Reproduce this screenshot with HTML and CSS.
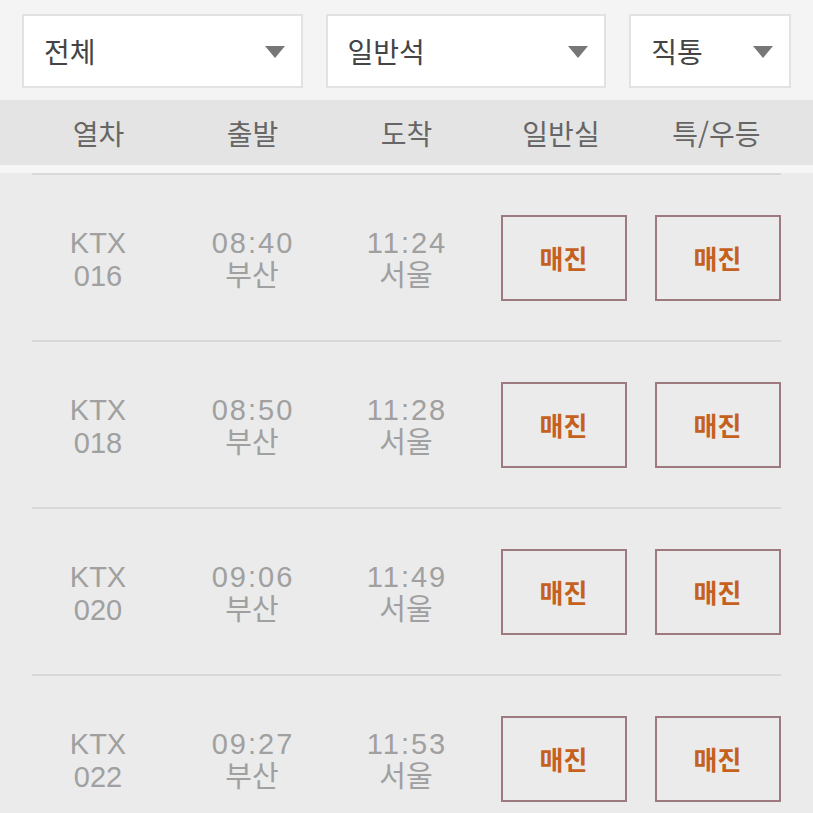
FILE: index.html
```html
<!DOCTYPE html>
<html lang="ko">
<head>
  <meta charset="UTF-8" />
  <title>열차 조회</title>
  <meta name="viewport" content="width=device-width, initial-scale=1.0" />
  <link rel="stylesheet" href="styles.css">
</head>
<body>
  <div class="filter-bar">
    <div class="select select-wide">
      <span>전체</span>
      <span class="caret"></span>
    </div>
    <div class="select select-wide">
      <span>일반석</span>
      <span class="caret"></span>
    </div>
    <div class="select select-small">
      <span>직통</span>
      <span class="caret"></span>
    </div>
  </div>

  <div class="table-head">
    <div>열차</div>
    <div>출발</div>
    <div>도착</div>
    <div>일반실</div>
    <div>특/우등</div>
  </div>
  <div class="head-gap"></div>

  <div class="train-list">
    <div class="train-row">
      <div class="cell">KTX<br>016</div>
      <div class="cell"><span class="time">08:40</span><br>부산</div>
      <div class="cell"><span class="time">11:24</span><br>서울</div>
      <div class="cell"><button class="soldout-btn">매진</button></div>
      <div class="cell"><button class="soldout-btn">매진</button></div>
    </div>
    <div class="train-row">
      <div class="cell">KTX<br>018</div>
      <div class="cell"><span class="time">08:50</span><br>부산</div>
      <div class="cell"><span class="time">11:28</span><br>서울</div>
      <div class="cell"><button class="soldout-btn">매진</button></div>
      <div class="cell"><button class="soldout-btn">매진</button></div>
    </div>
    <div class="train-row">
      <div class="cell">KTX<br>020</div>
      <div class="cell"><span class="time">09:06</span><br>부산</div>
      <div class="cell"><span class="time">11:49</span><br>서울</div>
      <div class="cell"><button class="soldout-btn">매진</button></div>
      <div class="cell"><button class="soldout-btn">매진</button></div>
    </div>
    <div class="train-row">
      <div class="cell">KTX<br>022</div>
      <div class="cell"><span class="time">09:27</span><br>부산</div>
      <div class="cell"><span class="time">11:53</span><br>서울</div>
      <div class="cell"><button class="soldout-btn">매진</button></div>
      <div class="cell"><button class="soldout-btn">매진</button></div>
    </div>
  </div>
</body>
</html>
```

FILE: styles.css
```css
body {
  margin: 0;
  font-family: 'Liberation Sans', 'Noto Sans CJK KR', sans-serif;
  background-color: #ebebeb;
  height: 813px;
  overflow: hidden;
}

.filter-bar {
  display: flex;
  gap: 23px;
  height: 100px;
  padding: 14px 22px 0 22px;
  box-sizing: border-box;
  background-color: #f4f4f4;
}

.select {
  display: flex;
  align-items: center;
  justify-content: space-between;
  height: 74px;
  box-sizing: border-box;
  padding: 0 16px 0 20px;
  background-color: #ffffff;
  border: 2px solid #e2e2e2;
  font-family: 'Noto Sans CJK KR', sans-serif;
  font-size: 28px;
  color: #444;
}

.select-wide {
  width: 281px;
}

.select-small {
  width: 162px;
}

.caret {
  width: 0;
  height: 0;
  border-left: 10px solid transparent;
  border-right: 10px solid transparent;
  border-top: 12px solid #777;
  margin-top: 2px;
}

.table-head {
  display: grid;
  grid-template-columns: repeat(5, 154px);
  justify-content: center;
  align-items: center;
  height: 65px;
  background-color: #e4e4e4;
  font-family: 'Noto Sans CJK KR', sans-serif;
  font-size: 28px;
  color: #666;
  text-align: center;
}

.table-head div:nth-child(4) {
  margin-left: 1px;
}

.table-head div:nth-child(5) {
  margin-left: 4px;
}

.head-gap {
  height: 8px;
  background-color: #f6f6f6;
}

.train-list {
  padding: 0 21px;
}

.train-row {
  display: grid;
  grid-template-columns: repeat(5, 154px);
  height: 167px;
  padding-top: 2px;
  box-sizing: border-box;
  align-items: center;
  position: relative;
}

/* separator line is narrower than the grid */
.train-row::before {
  content: "";
  position: absolute;
  top: 0;
  left: 11px;
  right: 11px;
  height: 2px;
  background-color: #d8d8d8;
}

.cell {
  text-align: center;
  font-size: 29px;
  line-height: 33px;
  color: #a0a0a0;
  margin-top: 4px;
}

.time {
  letter-spacing: 2px;
  margin-right: -2px;
}

.cell:nth-child(4),
.cell:nth-child(5) {
  margin-top: 0;
  margin-left: 7px;
}

.soldout-btn {
  width: 126px;
  height: 86px;
  background-color: transparent;
  border: 2px solid #9c7a80;
  font-family: 'Noto Sans CJK KR', sans-serif;
  font-size: 26px;
  font-weight: bold;
  color: #c5611c;
  cursor: pointer;
}
```
